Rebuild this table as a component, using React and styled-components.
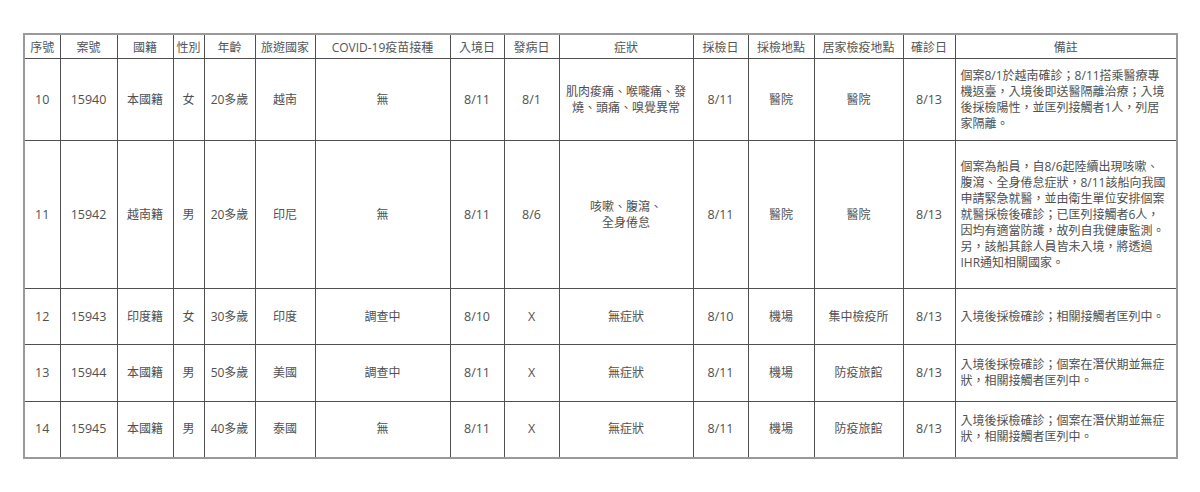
import React from "react";
import styled, { createGlobalStyle } from "styled-components";

const Global = createGlobalStyle`
  html, body { margin: 0; padding: 0; background: #fff; }
  body { font-family: "Open Sans", "Noto Sans CJK TC", sans-serif; }
`;

const Page = styled.div`
  padding: 33px 0 0 23px;
  width: 1200px;
  height: 492px;
  box-sizing: border-box;
  background: #fff;
`;

const Table = styled.table`
  border-collapse: collapse;
  table-layout: fixed;
  width: 1153px;
  border: 2px solid #9a9a9a;
  color: #505050;
  font-size: 12px;
`;

const Cell = styled.td`
  border: 1px solid #505050;
  padding: 0 ${(p) => (p.$left ? "5px" : "2px")};
  text-align: ${(p) => (p.$left ? "left" : "center")};
  vertical-align: middle;
  line-height: 16px;
  font-family: "Open Sans", "Noto Sans CJK TC", sans-serif;
  font-size: ${(p) => (p.$num ? "12.5px" : "12px")};
  overflow: hidden;
`;

const HeadCell = styled.th`
  border: 1px solid #505050;
  font-weight: 400;
  font-size: 12px;
  color: #555;
  height: 23px;
  padding: 0;
  text-align: center;
  vertical-align: middle;
  font-family: "Open Sans", "Noto Sans CJK TC", sans-serif;
`;

const Row = styled.tr`
  height: ${(p) => p.$h}px;
`;

const Line = styled.span`
  display: block;
  white-space: nowrap;
`;

const widths = [36, 57, 56, 31, 51, 60, 135, 54, 55, 134, 55, 66, 89, 52, 222];
const headers = [
  "序號", "案號", "國籍", "性別", "年齡", "旅遊國家", "COVID-19疫苗接種",
  "入境日", "發病日", "症狀", "採檢日", "採檢地點", "居家檢疫地點", "確診日", "備註",
];

const rows = [
  {
    h: 82,
    cells: ["10", "15940", "本國籍", "女", "20多歲", "越南", "無", "8/11", "8/1",
      ["肌肉痠痛、喉嚨痛、發", "燒、頭痛、嗅覺異常"], "8/11", "醫院", "醫院", "8/13"],
    remark: ["個案8/1於越南確診；8/11搭乘醫療專", "機返臺，入境後即送醫隔離治療；入境", "後採檢陽性，並匡列接觸者1人，列居", "家隔離。"],
  },
  {
    h: 148,
    cells: ["11", "15942", "越南籍", "男", "20多歲", "印尼", "無", "8/11", "8/6",
      ["咳嗽、腹瀉、", "全身倦怠"], "8/11", "醫院", "醫院", "8/13"],
    remark: [
      "個案為船員，自8/6起陸續出現咳嗽、",
      "腹瀉、全身倦怠症狀，8/11該船向我國",
      "申請緊急就醫，並由衛生單位安排個案",
      "就醫採檢後確診；已匡列接觸者6人，",
      "因均有適當防護，故列自我健康監測。",
      "另，該船其餘人員皆未入境，將透過",
      "IHR通知相關國家。",
    ],
  },
  {
    h: 56,
    cells: ["12", "15943", "印度籍", "女", "30多歲", "印度", "調查中", "8/10", "X", "無症狀", "8/10", "機場", "集中檢疫所", "8/13"],
    remark: ["入境後採檢確診；相關接觸者匡列中。"],
  },
  {
    h: 57,
    cells: ["13", "15944", "本國籍", "男", "50多歲", "美國", "調查中", "8/11", "X", "無症狀", "8/11", "機場", "防疫旅館", "8/13"],
    remark: ["入境後採檢確診；個案在潛伏期並無症", "狀，相關接觸者匡列中。"],
  },
  {
    h: 56,
    cells: ["14", "15945", "本國籍", "男", "40多歲", "泰國", "無", "8/11", "X", "無症狀", "8/11", "機場", "防疫旅館", "8/13"],
    remark: ["入境後採檢確診；個案在潛伏期並無症", "狀，相關接觸者匡列中。"],
  },
];

const isNum = (v) => typeof v === "string" && /^[0-9/X]+$/.test(v);

export default function App() {
  return (
    <Page lang="zh-TW">
      <Global />
      <Table>
        <colgroup>
          {widths.map((w, i) => (
            <col key={i} style={{ width: w }} />
          ))}
        </colgroup>
        <thead>
          <tr>
            {headers.map((h) => (
              <HeadCell key={h}>{h}</HeadCell>
            ))}
          </tr>
        </thead>
        <tbody>
          {rows.map((r, ri) => (
            <Row key={ri} $h={r.h}>
              {r.cells.map((c, ci) => (
                <Cell key={ci} $num={isNum(c)}>
                  {Array.isArray(c) ? c.map((l, li) => <Line key={li}>{l}</Line>) : c}
                </Cell>
              ))}
              <Cell $left>
                {r.remark.map((l, li) => (
                  <Line key={li}>{l}</Line>
                ))}
              </Cell>
            </Row>
          ))}
        </tbody>
      </Table>
    </Page>
  );
}
